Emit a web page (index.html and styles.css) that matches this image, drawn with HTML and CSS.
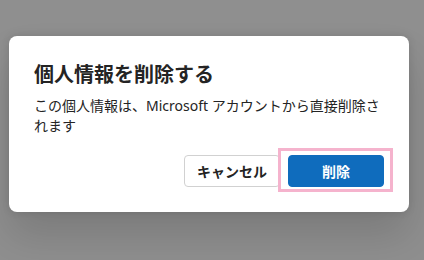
FILE: index.html
```html
<!DOCTYPE html>
<html lang="ja">
<head>
<meta charset="utf-8">
<link rel="stylesheet" href="styles.css">
</head>
<body>
<div class="backdrop">
  <div class="dialog" role="dialog">
    <h2 class="title">個人情報を削除する</h2>
    <p class="content">この個人情報は、Microsoft アカウントから直接削除されます</p>
    <div class="actions">
      <button class="btn btn-secondary">キャンセル</button>
      <button class="btn btn-primary">削除<span class="highlight"></span></button>
    </div>
  </div>
</div>
</body>
</html>
```
FILE: styles.css
```css
html, body {
  margin: 0;
  padding: 0;
}
body {
  width: 424px;
  height: 260px;
  background: #8f8f8f;
  overflow: hidden;
  font-family: "Noto Sans", "Noto Sans CJK JP", sans-serif;
}
.backdrop {
  padding: 36px 0 0 9px;
}
.dialog {
  width: 400px;
  box-sizing: border-box;
  background: #ffffff;
  border-radius: 8px;
  padding: 25px 25px 25px 24px;
  box-shadow: 0 0 8px rgba(0, 0, 0, 0.12), 0 24px 40px rgba(0, 0, 0, 0.14);
}
.title {
  margin: 0;
  font-size: 20px;
  line-height: 28px;
  font-weight: 700;
  color: #242424;
  padding-left: 1px;
}
.content {
  margin: 7px 0 0 0;
  font-size: 14px;
  line-height: 20px;
  color: #242424;
  padding-left: 1px;
}
.actions {
  display: flex;
  justify-content: flex-end;
  gap: 8px;
  margin-top: 19px;
}
.btn {
  position: relative;
  width: 96px;
  height: 32px;
  box-sizing: border-box;
  border-radius: 4px;
  font-family: "Noto Sans", "Noto Sans CJK JP", sans-serif;
  font-size: 14px;
  font-weight: 700;
  padding: 0;
}
.btn-secondary {
  background: #ffffff;
  border: 1px solid #d1d1d1;
  color: #242424;
}
.btn-primary {
  background: #0f6cbd;
  border: 1px solid #0f6cbd;
  color: #ffffff;
}
.highlight {
  position: absolute;
  left: -11px;
  top: -8px;
  right: -10px;
  bottom: -6px;
  border: 3px solid #f5b3cd;
  pointer-events: none;
}
```
